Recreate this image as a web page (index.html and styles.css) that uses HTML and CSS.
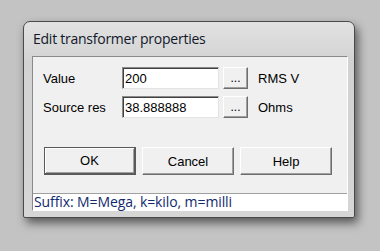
FILE: index.html
```html
<!DOCTYPE html>
<html lang="en">
<head>
    <meta charset="UTF-8">
    <title>Edit transformer properties</title>
    <link rel="stylesheet" href="styles.css">
</head>
<body>
    <div class="window">
        <div class="title">Edit transformer properties</div>
        <div class="client">
            <div class="row">
                <span class="label">Value</span>
                <input class="field" type="text" value="200">
                <button class="dots">...</button>
                <span class="unit">RMS V</span>
            </div>
            <div class="row">
                <span class="label">Source res</span>
                <input class="field" type="text" value="38.888888">
                <button class="dots">...</button>
                <span class="unit">Ohms</span>
            </div>
            <div class="actions">
                <button class="btn default">OK</button>
                <button class="btn">Cancel</button>
                <button class="btn">Help</button>
            </div>
            <div class="status">Suffix: M=Mega, k=kilo, m=milli</div>
        </div>
    </div>
</body>
</html>
```

FILE: styles.css
```css
body, html {
    margin: 0;
    padding: 0;
    height: 100%;
    background-color: #c3c3c3;
    overflow: hidden;
}
.window {
    margin: 21px 0 0 23px;
    width: 330px;
    height: 195px;
    border: 1px solid #4a4a4a;
    border-radius: 7px 7px 2px 2px;
    background: linear-gradient(#e2e2e2, #d2d2d2 40px, #d6d6d6);
    box-shadow: 3px 5px 10px rgba(0, 0, 0, 0.55);
    display: flex;
    flex-direction: column;
}
.title {
    height: 34px;
    padding-left: 9px;
    font-family: 'Open Sans', sans-serif;
    font-size: 14px;
    letter-spacing: -0.25px;
    line-height: 34px;
    color: #10182a;
}
.client {
    margin: 0 6px 6px 8px;
    flex: 1;
    background-color: #f0f0f0;
    border: 1px solid #8a8a8a;
    border-right-color: #fff;
    border-bottom-color: #fff;
    display: flex;
    flex-direction: column;
    font-family: 'Liberation Sans', Arial, sans-serif;
    font-size: 13px;
    color: #000;
}
.row {
    display: flex;
    align-items: center;
    height: 22px;
    margin-top: 7px;
    padding-left: 10px;
}
.row:first-child {
    margin-top: 10px;
}
.label {
    width: 79px;
}
.field {
    box-sizing: border-box;
    width: 97px;
    height: 22px;
    margin: 0;
    padding: 0 0 0 2px;
    border: 1px solid #e3e3e3;
    border-top-color: #8a8a8a;
    border-left-color: #8a8a8a;
    box-shadow: inset 1px 1px 0 #404040;
    background: #fff;
    font-family: 'Liberation Sans', Arial, sans-serif;
    font-size: 13px;
    color: #000;
    outline: none;
}
.dots {
    box-sizing: border-box;
    width: 25px;
    height: 22px;
    margin: 0 0 0 4px;
    padding: 0;
    border: 1px solid #fff;
    border-right-color: #6e6e6e;
    border-bottom-color: #6e6e6e;
    box-shadow: inset -1px -1px 0 #a0a0a0;
    background: #f0f0f0;
    font-family: 'Liberation Sans', Arial, sans-serif;
    font-size: 12px;
    line-height: 20px;
    color: #000;
}
.unit {
    margin-left: 10px;
}
.actions {
    display: flex;
    gap: 6px;
    margin-top: 29px;
    padding-left: 11px;
}
.btn {
    box-sizing: border-box;
    width: 92px;
    height: 28px;
    margin: 0;
    padding: 0;
    border: 1px solid #fff;
    border-right-color: #6e6e6e;
    border-bottom-color: #6e6e6e;
    box-shadow: inset -1px -1px 0 #a0a0a0;
    background: #f0f0f0;
    font-family: 'Liberation Sans', Arial, sans-serif;
    font-size: 13px;
    color: #000;
}
.btn.default {
    border: 1px solid #5a5a5a;
    border-right-width: 2px;
    border-bottom-width: 2px;
    box-shadow: inset 1px 1px 0 #fff, inset -1px -1px 0 #a0a0a0;
}
.status {
    margin-top: auto;
    height: 16px;
    border-top: 1px solid #a0a0a0;
    padding-left: 1px;
    background: #fff;
    font-family: 'Open Sans', sans-serif;
    font-size: 14px;
    letter-spacing: -0.1px;
    line-height: 16px;
    color: #122a6e;
    white-space: nowrap;
}
```
